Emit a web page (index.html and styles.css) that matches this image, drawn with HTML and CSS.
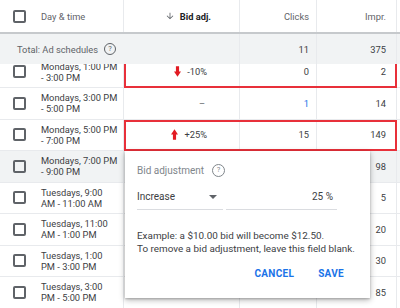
FILE: index.html
```html
<!DOCTYPE html>
<html lang="en">
<head>
    <meta charset="UTF-8">
    <meta name="viewport" content="width=device-width, initial-scale=1.0">
    <title>Ad schedule bid adjustments</title>
    <link rel="stylesheet" href="styles.css">
</head>
<body>
    <div class="table">
        <!-- Header -->
        <div class="row head">
            <div class="cell day"><span class="check"></span><span>Day &amp; time</span></div>
            <div class="cell bid sorted">
                <svg class="sort-arrow" viewBox="0 0 24 24" width="10" height="10"><path d="M20 12l-1.41-1.41L13 16.17V4h-2v12.17l-5.58-5.59L4 12l8 8 8-8z" fill="#5f6368"/></svg>
                Bid adj.
            </div>
            <div class="cell num">Clicks</div>
            <div class="cell num last">Impr.</div>
            <div class="cell edge"></div>
        </div>

        <!-- Totals -->
        <div class="row total">
            <div class="cell day total-label">Total: Ad schedules <span class="help">?</span></div>
            <div class="cell bid"></div>
            <div class="cell num">11</div>
            <div class="cell num last">375</div>
            <div class="cell edge"></div>
        </div>

        <div class="body">
            <div class="rows">
                <div class="row flagged">
                    <div class="cell day"><span class="check"></span><span class="when">Mondays, 1:00 PM<br>- 3:00 PM</span></div>
                    <div class="cell bid"><svg class="bid-arrow" viewBox="0 0 8 12" width="7" height="11"><polygon points="2.2,0 5.8,0 5.8,6 8,6 4,12 0,6 2.2,6" fill="#e21b23"/></svg>-10%</div>
                    <div class="cell num">0</div>
                    <div class="cell num last">2</div>
                    <div class="cell edge"></div>
                </div>
                <div class="row">
                    <div class="cell day"><span class="check"></span><span class="when">Mondays, 3:00 PM<br>- 5:00 PM</span></div>
                    <div class="cell bid muted">–</div>
                    <div class="cell num link">1</div>
                    <div class="cell num last">14</div>
                    <div class="cell edge"></div>
                </div>
                <div class="row flagged">
                    <div class="cell day"><span class="check"></span><span class="when">Mondays, 5:00 PM<br>- 7:00 PM</span></div>
                    <div class="cell bid"><svg class="bid-arrow" viewBox="0 0 8 12" width="7" height="11"><polygon points="2.2,12 5.8,12 5.8,6 8,6 4,0 0,6 2.2,6" fill="#e21b23"/></svg>+25%</div>
                    <div class="cell num">15</div>
                    <div class="cell num last">149</div>
                    <div class="cell edge"></div>
                </div>
                <div class="row hover">
                    <div class="cell day"><span class="check"></span><span class="when">Mondays, 7:00 PM<br>- 9:00 PM</span></div>
                    <div class="cell bid"></div>
                    <div class="cell num"></div>
                    <div class="cell num last">98</div>
                    <div class="cell edge"></div>
                </div>
                <div class="row">
                    <div class="cell day"><span class="check"></span><span class="when">Tuesdays, 9:00<br>AM - 11:00 AM</span></div>
                    <div class="cell bid"></div>
                    <div class="cell num"></div>
                    <div class="cell num last">5</div>
                    <div class="cell edge"></div>
                </div>
                <div class="row">
                    <div class="cell day"><span class="check"></span><span class="when">Tuesdays, 11:00<br>AM - 1:00 PM</span></div>
                    <div class="cell bid"></div>
                    <div class="cell num"></div>
                    <div class="cell num last">20</div>
                    <div class="cell edge"></div>
                </div>
                <div class="row">
                    <div class="cell day"><span class="check"></span><span class="when">Tuesdays, 1:00<br>PM - 3:00 PM</span></div>
                    <div class="cell bid"></div>
                    <div class="cell num"></div>
                    <div class="cell num last">30</div>
                    <div class="cell edge"></div>
                </div>
                <div class="row">
                    <div class="cell day"><span class="check"></span><span class="when">Tuesdays, 3:00<br>PM - 5:00 PM</span></div>
                    <div class="cell bid"></div>
                    <div class="cell num"></div>
                    <div class="cell num last">85</div>
                    <div class="cell edge"></div>
                </div>
            </div>
        </div>

        <!-- Bid adjustment editor -->
        <div class="popup">
            <div class="popup-title">Bid adjustment <span class="help">?</span></div>
            <div class="form-row">
                <div class="select">Increase <span class="caret"></span></div>
                <div class="input">25 %</div>
            </div>
            <p class="example">Example: a $10.00 bid will become $12.50.<br>To remove a bid adjustment, leave this field blank.</p>
            <div class="actions">
                <button>CANCEL</button>
                <button>SAVE</button>
            </div>
        </div>
    </div>
</body>
</html>
```

FILE: styles.css
```css
body {
    margin: 0;
    font-family: Roboto, "Liberation Sans", sans-serif;
    font-size: 9.3px;
    color: #3c4043;
    background: #fff;
}
.table {
    position: relative;
    width: 400px;
    height: 308px;
    display: flex;
    flex-direction: column;
    overflow: hidden;
}
.row {
    position: relative;
    display: grid;
    grid-template-columns: 124px 116px 77px 80px 1fr;
    height: 31.5px;
    border-bottom: 1px solid #e8eaed;
    box-sizing: border-box;
    white-space: nowrap;
}
.cell {
    display: flex;
    align-items: center;
    border-right: 1px solid #e8eaed;
    box-sizing: border-box;
}
.cell.edge {
    border-right: none;
}
.day {
    padding-left: 13px;
    gap: 15px;
}
.bid {
    justify-content: flex-end;
    padding-right: 32px;
    gap: 6px;
}
.num {
    justify-content: flex-end;
    padding-right: 7px;
}
.num.last {
    padding-right: 10px;
}
.check {
    width: 13px;
    height: 13px;
    border: 2px solid #5f6368;
    border-radius: 2px;
    box-sizing: border-box;
    flex-shrink: 0;
}
.when {
    line-height: 11px;
}

/* header */
.head {
    height: 34px;
    border-bottom: 2px solid #c6c9cc;
    color: #5f6368;
}
.head .sorted {
    color: #202124;
    font-weight: bold;
    padding-right: 28px;
    gap: 5px;
}

/* totals */
.total {
    height: 30px;
    background: #f1f3f4;
    border-bottom: none;
}
.total .day {
    padding-left: 17px;
    gap: 0;
    border-right: none;
    color: #5f6368;
}
.help {
    display: inline-flex;
    align-items: center;
    justify-content: center;
    width: 10px;
    height: 10px;
    margin-left: 6px;
    border: 1px solid #5f6368;
    border-radius: 50%;
    font-size: 7.5px;
    line-height: 1;
}

.body {
    flex: 1;
    overflow: hidden;
}
.rows {
    margin-top: -7.5px;
}
.muted {
    color: #5f6368;
    padding-right: 34px;
}
.link {
    color: #1a73e8;
}
.hover {
    background: #f1f3f4;
}
.flagged::after {
    content: "";
    position: absolute;
    left: 124px;
    right: 3px;
    top: 0;
    bottom: -1px;
    border: 2px solid #e8303a;
    pointer-events: none;
}

/* popup */
.popup {
    position: absolute;
    left: 125px;
    top: 151px;
    width: 245px;
    height: 147px;
    background: #fff;
    box-shadow: 0 2px 6px rgba(0, 0, 0, 0.3), 0 1px 2px rgba(0, 0, 0, 0.2);
    padding: 12px 12px 0;
    box-sizing: border-box;
    white-space: nowrap;
}
.popup-title {
    display: flex;
    align-items: center;
    color: #80868b;
    font-size: 10px;
    height: 14px;
}
.popup-title .help {
    border-color: #80868b;
    color: #80868b;
    width: 11px;
    height: 11px;
    margin-left: 8px;
}
.form-row {
    display: flex;
    gap: 3px;
    margin-top: 7px;
}
.select, .input {
    height: 26px;
    display: flex;
    align-items: center;
    border-bottom: 1px solid #dadce0;
    box-sizing: border-box;
    font-size: 10px;
    color: #3c4043;
}
.select {
    width: 86px;
    justify-content: space-between;
    padding-right: 6px;
}
.caret {
    width: 0;
    height: 0;
    border-left: 4px solid transparent;
    border-right: 4px solid transparent;
    border-top: 4px solid #5f6368;
}
.input {
    width: 111px;
    justify-content: flex-end;
    padding-right: 4px;
}
.example {
    margin: 19px 0 0;
    font-size: 9.9px;
    line-height: 13px;
    color: #3c4043;
}
.actions {
    display: flex;
    justify-content: flex-end;
    gap: 24px;
    margin-top: 13px;
    padding-right: 14px;
}
.actions button {
    background: none;
    border: none;
    padding: 0;
    font-family: inherit;
    font-size: 10px;
    font-weight: bold;
    letter-spacing: 0.3px;
    color: #1a73e8;
    cursor: pointer;
}
```
